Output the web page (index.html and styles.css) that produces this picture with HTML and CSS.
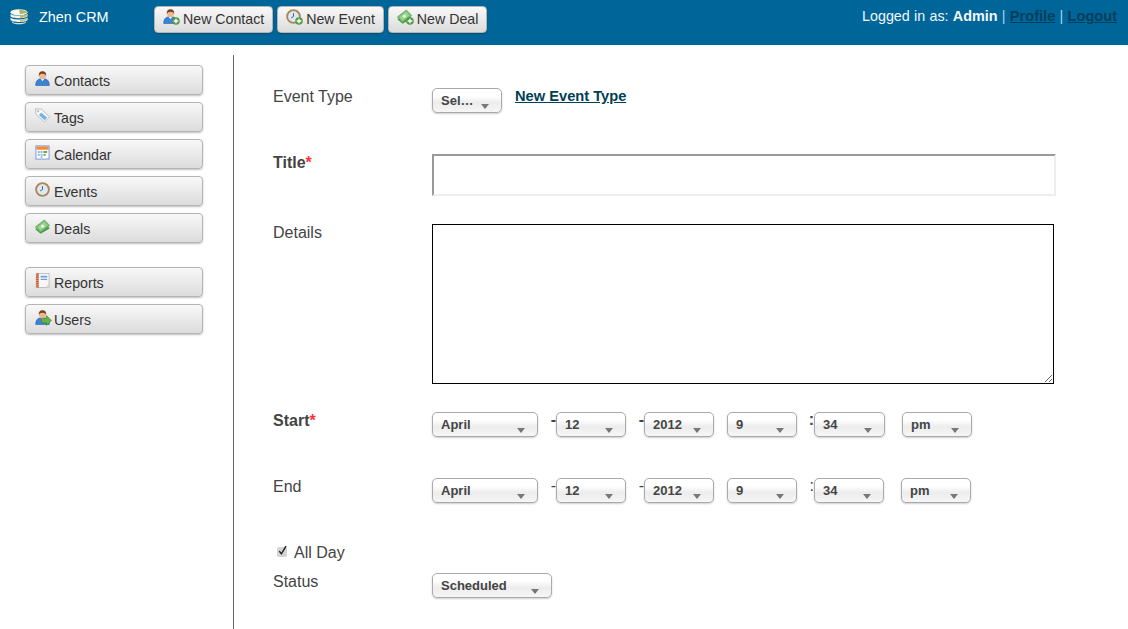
FILE: index.html
```html
<!DOCTYPE html>
<html lang="en">
<head>
  <meta charset="UTF-8" />
  <meta name="viewport" content="width=device-width, initial-scale=1.0"/>
  <title>Zhen CRM</title>
  <link rel="stylesheet" href="styles.css">
</head>
<body>

  <!-- icon set -->
  <svg class="icon-defs" width="0" height="0">
    <symbol id="i-person" viewBox="0 0 16 16">
      <path d="M.8 15.500c-.3-4 1.700-6.500 4.200-7h6c2.500.5 4.500 3 4.200 7z" fill="#3b82d6" stroke="#1f5aa8" stroke-width=".6"/>
      <path d="M6 8.500l2 2.500 2-2.500z" fill="#e8eef8"/>
      <circle cx="8" cy="5" r="3.600" fill="#f0b88e"/>
      <path d="M4.200 5.500C3.500 1.500 6 .2 8 .2s4.500 1.300 3.800 5.300c-.5-1.800-1.800-2.500-3.800-2.500s-3.300.7-3.800 2.500z" fill="#7a4320"/>
    </symbol>
    <symbol id="i-tag" viewBox="0 0 16 16">
      <path d="M.5.800l6.500.4 8.500 8.300-5.300 5.500L1 6.700z" fill="#f6f6f6" stroke="#b5b5b5" stroke-width=".9"/>
      <path d="M6.500 5l6.500 5-2.800 3-6-5.500z" fill="#6fb2ec"/>
      <circle cx="3.300" cy="3.500" r="1" fill="#aaa"/>
    </symbol>
    <symbol id="i-calendar" viewBox="0 0 16 16">
      <rect x="1" y="1" width="14" height="14" fill="#fdfdfd" stroke="#6f97d6"/>
      <rect x="1.500" y="1.500" width="13" height="3.500" fill="#f08a3c"/>
      <path d="M3 6.500h2v2H3zM6 6.500h2v2H6zM3 9.500h2v2H3zM6 9.500h2v2H6zM6 12h2v1.500H6z" fill="#8fb0de"/>
      <path d="M9 6.500h4v2H9zM9 9.500h2.500v2H9z" fill="#5fae5a"/>
    </symbol>
    <symbol id="i-clock" viewBox="0 0 16 16">
      <circle cx="8" cy="8" r="6.800" fill="#dbe8f5" stroke="#ad8753" stroke-width="2"/>
      <path d="M8 4.500V8l-2.500 1.500" fill="none" stroke="#555" stroke-width="1"/>
    </symbol>
    <symbol id="i-money" viewBox="0 0 16 16">
      <path d="M.3 11L10.500 4l5.200 6L6 15.800z" fill="#4f9a4d"/>
      <path d="M.3 8.500L10 1l5.700 6L5.500 14.500z" fill="#78bf72" stroke="#4f9a4d" stroke-width=".6"/>
      <path d="M2.800 8.500L10 3l3.200 3.800L5.800 12z" fill="#9ad592"/>
      <circle cx="8" cy="7.600" r="1.700" fill="#e8f5e2"/>
    </symbol>
    <symbol id="i-book" viewBox="0 0 16 16">
      <rect x="2.500" y=".5" width="12.500" height="15" fill="#f7f7f7" stroke="#a8a8a8" stroke-width=".7"/>
      <rect x="1" y=".5" width="3" height="15" fill="#c4582e"/>
      <path d="M1 2h3M1 4h3M1 6h3M1 8h3M1 10h3M1 12h3M1 14h3" stroke="#f1c9a8" stroke-width=".6"/>
      <path d="M6 3h7v1.700H6zM6 6h7v1.400H6z" fill="#6f9fe0"/>
      <path d="M15 11l-3.500 4.500H15z" fill="#d6d6d6"/>
    </symbol>
    <symbol id="i-db" viewBox="0 0 18 16">
      <ellipse cx="9" cy="3.300" rx="8.500" ry="3.100" fill="#f7f7ee"/>
      <path d="M9 .6l7.500 1.400.8 1.800-7.300 1.500z" fill="#aeb36a"/>
      <path d="M.5 4.800c1.500 2.600 15.500 2.600 17 0v2.400c-1.500 2.600-15.500 2.600-17 0z" fill="#f2f2e8"/>
      <path d="M10 7.300l7.500-2v1.900l-7.500 2z" fill="#b9bd78"/>
      <path d="M.5 8.500c1.500 2.600 15.500 2.600 17 0V11c-1.500 2.600-15.500 2.600-17 0z" fill="#f4f4ee"/>
      <path d="M10 11l7.500-2v1.900l-7.500 2z" fill="#c3c68a"/>
      <path d="M2 12.400c1.500 2 12.500 2 14 0v1c-1.500 2.400-12.500 2.400-14 0z" fill="#dedfd0"/>
    </symbol>
    <symbol id="i-plus" viewBox="0 0 8 8">
      <circle cx="4" cy="4" r="3.800" fill="#4f9d46"/>
      <path d="M3.300 1.700h1.400v1.600h1.600v1.400H4.700v1.600H3.300V4.700H1.700V3.300h1.600z" fill="#fff"/>
    </symbol>
    <symbol id="i-arrow" viewBox="0 0 10 10">
      <path d="M.5 3h4.500V.5L9.500 5 5 9.500V7H.5z" fill="#67b04a" stroke="#3f8a2e" stroke-width=".6"/>
    </symbol>
  </svg>

  <header class="topbar">
    <div class="brand">
      <svg class="brand-logo"><use href="#i-db"/></svg>
      <span>Zhen CRM</span>
    </div>
    <nav class="quick">
      <a class="btn btn-new" href="#contact"><span class="ico"><svg><use href="#i-person"/></svg><svg class="badge"><use href="#i-plus"/></svg></span>New Contact</a>
      <a class="btn btn-new" href="#event"><span class="ico"><svg><use href="#i-clock"/></svg><svg class="badge"><use href="#i-plus"/></svg></span>New Event</a>
      <a class="btn btn-new" href="#deal"><span class="ico"><svg><use href="#i-money"/></svg><svg class="badge"><use href="#i-plus"/></svg></span>New Deal</a>
    </nav>
    <div class="session">
      Logged in as: <strong>Admin</strong> <span class="pipe">|</span> <a href="#profile">Profile</a> <span class="pipe">|</span> <a href="#logout">Logout</a>
    </div>
  </header>

  <div class="layout">
    <aside class="sidebar">
      <nav class="side-group">
        <a class="btn btn-side" href="#contacts"><span class="ico"><svg><use href="#i-person"/></svg></span>Contacts</a>
        <a class="btn btn-side" href="#tags"><span class="ico"><svg><use href="#i-tag"/></svg></span>Tags</a>
        <a class="btn btn-side" href="#calendar"><span class="ico"><svg><use href="#i-calendar"/></svg></span>Calendar</a>
        <a class="btn btn-side" href="#events"><span class="ico"><svg><use href="#i-clock"/></svg></span>Events</a>
        <a class="btn btn-side" href="#deals"><span class="ico"><svg><use href="#i-money"/></svg></span>Deals</a>
      </nav>
      <nav class="side-group">
        <a class="btn btn-side" href="#reports"><span class="ico"><svg><use href="#i-book"/></svg></span>Reports</a>
        <a class="btn btn-side" href="#users"><span class="ico"><svg><use href="#i-person"/></svg><svg class="badge badge-arrow"><use href="#i-arrow"/></svg></span>Users</a>
      </nav>
    </aside>

    <main class="content">
      <form class="event-form">
        <div class="row row-type">
          <label class="lbl">Event Type</label>
          <div class="fields">
            <div class="sel w-70"><span>Sel…</span><i></i></div>
            <a class="new-type" href="#new-type">New Event Type</a>
          </div>
        </div>

        <div class="row row-title">
          <label class="lbl lbl-req">Title<em>*</em></label>
          <input class="title-input" type="text" />
        </div>

        <div class="row row-details">
          <label class="lbl">Details</label>
          <textarea class="details-input"></textarea>
        </div>

        <div class="row row-start">
          <label class="lbl lbl-req">Start<em>*</em></label>
          <div class="fields">
            <div class="sel w-106"><span>April</span><i></i></div>
            <b class="sep sep-18">-</b>
            <div class="sel w-70"><span>12</span><i></i></div>
            <b class="sep sep-18">-</b>
            <div class="sel w-70"><span>2012</span><i></i></div>
            <b class="sep sep-13"></b>
            <div class="sel w-70"><span>9</span><i></i></div>
            <b class="sep sep-17">:</b>
            <div class="sel w-71"><span>34</span><i></i></div>
            <b class="sep sep-17"></b>
            <div class="sel w-70"><span>pm</span><i></i></div>
          </div>
        </div>

        <div class="row row-end">
          <label class="lbl">End</label>
          <div class="fields">
            <div class="sel w-106"><span>April</span><i></i></div>
            <span class="sep sep-18">-</span>
            <div class="sel w-70"><span>12</span><i></i></div>
            <span class="sep sep-18">-</span>
            <div class="sel w-70"><span>2012</span><i></i></div>
            <span class="sep sep-13"></span>
            <div class="sel w-70"><span>9</span><i></i></div>
            <span class="sep sep-17">:</span>
            <div class="sel w-70"><span>34</span><i></i></div>
            <span class="sep sep-17"></span>
            <div class="sel w-70"><span>pm</span><i></i></div>
          </div>
        </div>

        <label class="allday">
          <span class="check"><svg viewBox="0 0 11 11"><path d="M2.500 4.500l2.300 3L10 -1" fill="none" stroke="#222" stroke-width="1.600"/></svg></span>
          All Day
        </label>

        <div class="row row-status">
          <label class="lbl">Status</label>
          <div class="sel w-120"><span>Scheduled</span><i></i></div>
        </div>
      </form>
    </main>
  </div>

</body>
</html>
```

FILE: styles.css
```css
body {
  margin: 0;
  font-family: "Liberation Sans", Arial, sans-serif;
  background: #fff;
  color: #444;
  overflow: hidden;
}
.icon-defs {
  display: block;
  height: 0;
}

/* top bar */
.topbar {
  display: flex;
  height: 45px;
  box-sizing: border-box;
  padding: 6px 11px 0 10px;
  background: #006699;
  color: #fff;
}
.brand {
  display: flex;
  width: 144px;
  gap: 11px;
  font-size: 14.4px;
  line-height: 22px;
}
.brand-logo {
  width: 18px;
  height: 16px;
  margin-top: 3px;
}
.quick {
  display: flex;
  gap: 4px;
  height: 27px;
}
.session {
  margin-left: auto;
  font-size: 14.3px;
  line-height: 20px;
  word-spacing: 0.3px;
  color: #f2f7fa;
}
.session strong {
  font-size: 14.4px;
}
.session a {
  color: #003f5c;
  font-size: 14.6px;
  font-weight: bold;
}
.pipe {
  color: #a9d4e8;
}

/* buttons */
.btn {
  display: flex;
  box-sizing: border-box;
  border: 1px solid #b4b4b4;
  border-radius: 4px;
  background: linear-gradient(#f8f8f8, #dcdcdc);
  box-shadow: 0 1px 2px rgba(0, 0, 0, 0.25);
  color: #333;
  text-decoration: none;
  font-size: 14.2px;
}
.btn-new {
  padding: 0 8px;
  line-height: 24px;
}
.btn-new .ico {
  margin: 2px 3px 0 0;
}
.btn-side {
  width: 178px;
  height: 30px;
  padding-left: 9px;
  line-height: 30px;
}
.btn-side .ico {
  margin: 5px 2px 0 0;
}
.ico {
  position: relative;
  flex: none;
  width: 17px;
  height: 16px;
}
.ico svg {
  display: block;
  width: 15px;
  height: 15px;
}
.ico .badge {
  position: absolute;
  right: 0;
  bottom: 0;
  width: 8px;
  height: 8px;
}
.ico .badge-arrow {
  width: 11px;
  height: 11px;
  right: 0;
  bottom: 0;
}

/* sidebar + content */
.layout {
  display: flex;
  height: 574px;
  margin-top: 10px;
}
.sidebar {
  flex: none;
  width: 234px;
  box-sizing: border-box;
  padding-top: 10px;
  border-right: 1px solid #666;
}
.side-group {
  display: flex;
  flex-direction: column;
  gap: 7px;
  margin: 0 0 24px 25px;
}
.content {
  flex: 1;
  padding: 33px 0 0 39px;
}

/* form rows */
.row {
  display: grid;
  grid-template-columns: 159px 1fr;
  align-items: start;
}
.row-title {
  margin-top: 41px;
}
.row-details,
.row-start {
  margin-top: 28px;
}
.row-end {
  margin-top: 41px;
}
.lbl {
  padding-top: 1px;
  font-size: 16px;
  line-height: 16px;
}
.lbl-req {
  font-weight: bold;
}
.lbl em {
  color: #f33;
  font-style: normal;
}
.fields {
  display: flex;
  align-items: flex-start;
}
.new-type {
  margin-left: 13px;
  color: #003f55;
  font-size: 14.67px;
  line-height: 16px;
  font-weight: bold;
}
.title-input {
  width: 624px;
  height: 42px;
  box-sizing: border-box;
  border: 2px solid #eee;
  border-top-color: #999;
  border-left-color: #999;
  outline: none;
}
.details-input {
  display: block;
  width: 622px;
  height: 160px;
  box-sizing: border-box;
  border: 1px solid #000;
  outline: none;
}
.allday {
  display: flex;
  align-items: center;
  margin: 41px 0 0 4px;
  height: 16px;
  padding-top: 1px;
  font-size: 16px;
  line-height: 16px;
}
.check {
  width: 10px;
  height: 10px;
  margin: -2px 7px 0 0;
  background: #d4d4d4;
  border-radius: 2px;
}
.check svg {
  display: block;
  width: 10px;
  height: 10px;
  overflow: visible;
}
.row-status {
  margin-top: 12px;
}

/* select look-alike */
.sel {
  display: flex;
  justify-content: space-between;
  box-sizing: border-box;
  height: 25px;
  padding: 0 12px 0 8px;
  border: 1px solid #aaa;
  border-radius: 5px;
  background: linear-gradient(#fff 30%, #ececec 60%, #f6f6f6);
  box-shadow: 0 1px 2px rgba(0, 0, 0, 0.2);
  font-size: 13px;
  font-weight: bold;
  line-height: 24px;
  color: #444;
}
.sel i {
  align-self: flex-end;
  width: 0;
  height: 0;
  margin-bottom: 3px;
  border-left: 4px solid transparent;
  border-right: 4px solid transparent;
  border-top: 5px solid #777;
}
.w-70 { width: 70px; }
.w-71 { width: 71px; }
.w-106 { width: 106px; }
.w-120 { width: 120px; }
.sep {
  flex: none;
  font-size: 16px;
  line-height: 16px;
  text-align: right;
}
.sep-13 { width: 13px; }
.sep-17 { width: 17px; }
.sep-18 { width: 18px; }
```
